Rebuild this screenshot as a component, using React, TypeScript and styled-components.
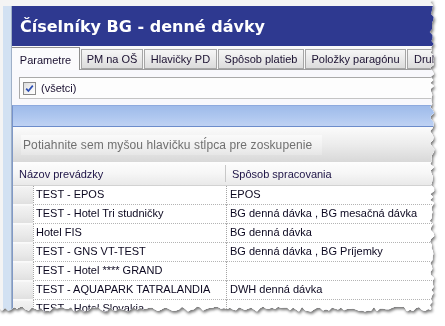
import React from "react";
import styled, { createGlobalStyle } from "styled-components";

const Global = createGlobalStyle`
  html, body { margin: 0; padding: 0; background: #ffffff; }
  body { width: 445px; height: 326px; overflow: hidden; font-family: "Liberation Sans", Arial, sans-serif; }
`;

const EDGE_X = 433;
const EDGE_Y = 309;

function jitter(i: number): number {
  const s = Math.sin(i * 12.9898 + 78.233) * 43758.5453;
  return (s - Math.floor(s)) * 2 - 1;
}

function tornPolygon(): string {
  const pts: string[] = ["0px 0px", `${EDGE_X}px 0px`];
  let i = 0;
  for (let y = 2; y < EDGE_Y; y += 3, i++) {
    pts.push(`${(EDGE_X - 1 + jitter(i) * 2.4).toFixed(1)}px ${y}px`);
  }
  i = 200;
  for (let x = EDGE_X - 2; x > 0; x -= 3, i++) {
    pts.push(`${x}px ${(EDGE_Y + jitter(i) * 2.6).toFixed(1)}px`);
  }
  pts.push(`0px ${EDGE_Y}px`);
  return `polygon(${pts.join(", ")})`;
}

const CLIP = tornPolygon();

const Page = styled.div`
  width: 445px;
  height: 326px;
  background: #ffffff;
  overflow: hidden;
`;

const Shadow = styled.div`
  width: 440px;
  height: 316px;
  filter: drop-shadow(1px 2px 1.5px rgba(0, 0, 0, 0.55));
`;

const Sheet = styled.div`
  width: 440px;
  height: 316px;
  box-sizing: border-box;
  clip-path: ${CLIP};
  background: #f4f4f4;
  padding: 6px 0 0 3px;
  display: flex;
`;

const LeftFrame = styled.div`
  flex: none;
  width: 8px;
  background: #d2e1f2;
  border-right: 1px solid #9fb0c8;
`;

const Window = styled.div`
  flex: 1;
  min-width: 0;
  display: flex;
  flex-direction: column;
  background: #f8f8fc;
  overflow: hidden;
`;

const TitleBar = styled.div`
  flex: none;
  height: 40px;
  display: flex;
  align-items: center;
  padding-left: 8px;
  background: #2e3990;
  color: #ffffff;
  font: bold 16px "DejaVu Sans", Verdana, sans-serif;
  white-space: nowrap;
`;

const TabStrip = styled.div`
  flex: none;
  height: 24px;
  box-sizing: border-box;
  display: flex;
  align-items: flex-end;
  gap: 1px;
  background: #f9f9f9;
  border-bottom: 1px solid #9c9c9c;
  white-space: nowrap;
`;

const Tab = styled.div<{ $w?: number; $active?: boolean }>`
  flex: none;
  width: ${(p) => (p.$w ? `${p.$w}px` : "auto")};
  height: ${(p) => (p.$active ? 23 : 20)}px;
  margin-bottom: ${(p) => (p.$active ? -1 : 0)}px;
  box-sizing: border-box;
  display: flex;
  align-items: center;
  justify-content: center;
  padding: ${(p) => (p.$w ? "0" : "0 6px")};
  font-size: 11px;
  color: #1a1030;
  border: 1px solid ${(p) => (p.$active ? "#8f8f8f" : "#a6a6a6")};
  border-left: ${(p) => (p.$active ? "none" : "1px solid #a6a6a6")};
  border-bottom: ${(p) => (p.$active ? "none" : "1px solid #a6a6a6")};
  background: ${(p) =>
    p.$active ? "#fbfbfd" : "linear-gradient(#f6f6f6 0%, #ebebeb 45%, #dcdcdc 100%)"};
  padding-top: ${(p) => (p.$active ? 1 : 0)}px;
`;

const Panel = styled.div`
  flex: 1;
  display: flex;
  flex-direction: column;
  padding-top: 7px;
  background: #f8f8fc;
`;

const CheckBar = styled.div`
  flex: none;
  margin-left: 7px;
  height: 22px;
  box-sizing: border-box;
  border: 1px solid #a9a9a9;
  border-right: none;
  border-bottom-color: #c4c4c4;
  background: #fdfdfd;
  display: flex;
  align-items: center;
  gap: 5px;
  padding-left: 3px;
  font-size: 11px;
  color: #1a1030;
`;

const CheckBox = styled.span`
  flex: none;
  width: 13px;
  height: 13px;
  box-sizing: border-box;
  border: 1px solid #8c8c8c;
  background: linear-gradient(135deg, #dcdcdc 0%, #f4f4f4 60%, #ffffff 100%);
  display: flex;
  align-items: center;
  justify-content: center;
`;

const BlueBand = styled.div`
  flex: none;
  margin-top: 6px;
  height: 22px;
  box-sizing: border-box;
  background: linear-gradient(#9fbbea 0%, #adc6ef 50%, #bfd2f3 100%);
  border-top: 1px solid #8eaade;
  border-left: 1px solid #7693cc;
  border-bottom: 1px solid #6c8ccb;
`;

const Grid = styled.div`
  flex: 1;
  display: flex;
  flex-direction: column;
  background: #ffffff;
  border-left: 1px solid #8099c6;
`;

const GroupPanel = styled.div`
  flex: none;
  height: 35px;
  box-sizing: border-box;
  padding: 8px 0 0 8px;
  background: linear-gradient(#fbfbfb 0%, #ececec 50%, #d8d8d8 100%);
`;

const GroupBox = styled.div`
  width: 301px;
  height: 20px;
  box-sizing: border-box;
  display: flex;
  align-items: center;
  padding-left: 2px;
  background: linear-gradient(#fafafa 0%, #f1f1f1 55%, #e6e6e6 100%);
  font-size: 12px;
  letter-spacing: 0.1px;
  color: #707070;
  white-space: nowrap;
`;

const HeaderRow = styled.div`
  flex: none;
  height: 24px;
  box-sizing: border-box;
  display: flex;
  background: linear-gradient(#fdfdfd 0%, #f6f6f6 50%, #e9e9e9 100%);
  border-bottom: 1px solid #d2d2d2;
  font-size: 11px;
  color: #1e1446;
`;

const HeaderCell = styled.div<{ $w?: number }>`
  flex: ${(p) => (p.$w ? "none" : "1")};
  width: ${(p) => (p.$w ? `${p.$w}px` : "auto")};
  box-sizing: border-box;
  display: flex;
  align-items: center;
  padding-left: 6px;
  padding-top: 1px;
  white-space: nowrap;
  & + & {
    border-left: 1px solid #c8c8c8;
    margin: 3px 0;
  }
`;

const Row = styled.div`
  flex: none;
  height: 19px;
  display: flex;
  font-size: 11px;
  color: #0c0820;
`;

const Selector = styled.div`
  flex: none;
  width: 20px;
  box-sizing: border-box;
  background: linear-gradient(#f3f3f3 0%, #e9e9e9 60%, #e0e0e0 100%);
  border-bottom: 1px solid #fafafa;
  border-top: 1px solid #f8f8f8;
`;

const Cell = styled.div<{ $w?: number }>`
  flex: ${(p) => (p.$w ? "none" : "1")};
  width: ${(p) => (p.$w ? `${p.$w}px` : "auto")};
  box-sizing: border-box;
  padding: 2px 0 0 ${(p) => (p.$w ? 2 : 3)}px;
  border-left: 1px dotted #a4a4a4;
  border-bottom: 1px dotted #b4b4b4;
  white-space: nowrap;
  overflow: hidden;
  line-height: 13px;
`;

const tabs = [
  { label: "Parametre", w: 68, active: true },
  { label: "PM na OŠ", w: 62 },
  { label: "Hlavičky PD", w: 73 },
  { label: "Spôsob platieb", w: 86 },
  { label: "Položky paragónu", w: 101 },
  { label: "Druh platby" },
];

const rows: [string, string][] = [
  ["TEST - EPOS", "EPOS"],
  ["TEST - Hotel Tri studničky", "BG denná dávka , BG mesačná dávka"],
  ["Hotel FIS", "BG denná dávka"],
  ["TEST - GNS VT-TEST", "BG denná dávka , BG Príjemky"],
  ["TEST - Hotel **** GRAND", ""],
  ["TEST - AQUAPARK TATRALANDIA", "DWH denná dávka"],
  ["TEST - Hotel Slovakia", ""],
];

export default function App() {
  return (
    <Page>
      <Global />
      <Shadow>
        <Sheet>
          <LeftFrame />
          <Window>
            <TitleBar>Číselníky BG - denné dávky</TitleBar>
            <TabStrip>
              {tabs.map((t) => (
                <Tab key={t.label} $w={t.w} $active={t.active}>
                  {t.label}
                </Tab>
              ))}
            </TabStrip>
            <Panel>
              <CheckBar>
                <CheckBox>
                  <svg width="9" height="9" viewBox="0 0 9 9">
                    <path d="M1.2 4.6 L3.4 7 L7.8 1.6" fill="none" stroke="#2d4fb4" strokeWidth="1.7" />
                  </svg>
                </CheckBox>
                (všetci)
              </CheckBar>
              <BlueBand />
              <Grid>
                <GroupPanel>
                  <GroupBox>Potiahnite sem myšou hlavičku stĺpca pre zoskupenie</GroupBox>
                </GroupPanel>
                <HeaderRow>
                  <HeaderCell $w={212}>Názov prevádzky</HeaderCell>
                  <HeaderCell>Spôsob spracovania</HeaderCell>
                </HeaderRow>
                {rows.map(([name, mode]) => (
                  <Row key={name}>
                    <Selector />
                    <Cell $w={193}>{name}</Cell>
                    <Cell>{mode}</Cell>
                  </Row>
                ))}
              </Grid>
            </Panel>
          </Window>
        </Sheet>
      </Shadow>
    </Page>
  );
}
